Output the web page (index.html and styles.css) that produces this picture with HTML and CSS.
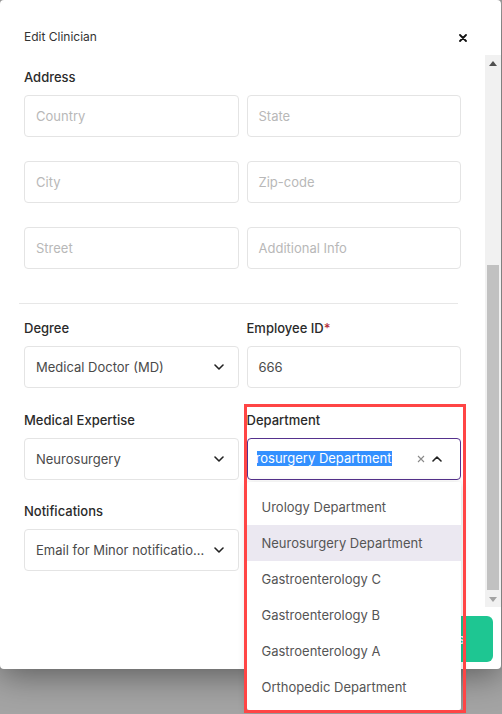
FILE: index.html
```html
<!DOCTYPE html>
<html>
<head>
<meta charset="utf-8">
<link rel="stylesheet" href="styles.css">
</head>
<body>
<div class="modal">
  <div class="modal-header">
    <span class="modal-title">Edit Clinician</span>
    <span class="close">
      <svg width="8" height="8" viewBox="0 0 8 8"><path d="M1 1L7 7M7 1L1 7" stroke="#111" stroke-width="1.8" stroke-linecap="round"/></svg>
    </span>
  </div>
  <div class="modal-body">
    <div class="content">
      <div class="section-label">Address</div>
      <div class="grid">
        <div class="input placeholder">Country</div>
        <div class="input placeholder">State</div>
        <div class="input placeholder">City</div>
        <div class="input placeholder">Zip-code</div>
        <div class="input placeholder">Street</div>
        <div class="input placeholder">Additional Info</div>
      </div>
      <div class="divider"></div>
      <div class="fields">
        <div class="field">
          <div class="label">Degree</div>
          <div class="input select"><span class="value">Medical Doctor (MD)</span>
            <svg class="chev" width="10" height="6" viewBox="0 0 10 6"><path d="M1 1L5 5L9 1" fill="none" stroke="#222" stroke-width="1.6" stroke-linecap="round" stroke-linejoin="round"/></svg>
          </div>
        </div>
        <div class="field">
          <div class="label">Employee ID<span class="req">*</span></div>
          <div class="input"><span class="value">666</span></div>
        </div>
        <div class="field">
          <div class="label">Medical Expertise</div>
          <div class="input select"><span class="value">Neurosurgery</span>
            <svg class="chev" width="10" height="6" viewBox="0 0 10 6"><path d="M1 1L5 5L9 1" fill="none" stroke="#222" stroke-width="1.6" stroke-linecap="round" stroke-linejoin="round"/></svg>
          </div>
        </div>
        <div class="field dept">
          <div class="label">Department</div>
          <div class="input select focused">
            <span class="typed"><span class="sel">Neurosurgery Department</span></span>
            <span class="clear">
              <svg width="8" height="8" viewBox="0 0 8 8"><path d="M1 1L7 7M7 1L1 7" stroke="#8a8a8a" stroke-width="1.1"/></svg>
            </span>
            <svg class="chev up" width="10" height="6" viewBox="0 0 10 6"><path d="M1 5L5 1L9 5" fill="none" stroke="#222" stroke-width="1.6" stroke-linecap="round" stroke-linejoin="round"/></svg>
          </div>
          <div class="menu">
            <div class="option">Urology Department</div>
            <div class="option active">Neurosurgery Department</div>
            <div class="option">Gastroenterology C</div>
            <div class="option">Gastroenterology B</div>
            <div class="option">Gastroenterology A</div>
            <div class="option">Orthopedic Department</div>
          </div>
        </div>
        <div class="field">
          <div class="label">Notifications</div>
          <div class="input select"><span class="value ellipsis">Email for Minor notifications</span>
            <svg class="chev" width="10" height="6" viewBox="0 0 10 6"><path d="M1 1L5 5L9 1" fill="none" stroke="#222" stroke-width="1.6" stroke-linecap="round" stroke-linejoin="round"/></svg>
          </div>
        </div>
      </div>
    </div>
    <div class="scrollbar">
      <div class="sb-btn">
        <svg width="8" height="5" viewBox="0 0 8 5"><path d="M0 5L4 0L8 5Z" fill="#505050"/></svg>
      </div>
      <div class="sb-track"><div class="sb-thumb"></div></div>
      <div class="sb-btn">
        <svg width="8" height="5" viewBox="0 0 8 5"><path d="M0 0L8 0L4 5Z" fill="#a3a3a3"/></svg>
      </div>
    </div>
  </div>
  <div class="modal-footer">
    <button class="btn-primary">Save Changes</button>
  </div>
</div>
<div class="annotation"></div>
</body>
</html>
```
FILE: styles.css
```css
* { box-sizing: border-box; }
html, body {
  margin: 0;
  padding: 0;
  width: 502px;
  height: 714px;
  overflow: hidden;
}
body {
  background: #a4a4a4;
  font-family: Inter, "Noto Sans", sans-serif;
  position: relative;
}
.modal {
  width: 501px;
  height: 669px;
  background: #fff;
  border-radius: 4px;
  box-shadow: 0 6px 34px rgba(0,0,0,0.45);
  display: flex;
  flex-direction: column;
}
.modal-header {
  height: 55px;
  display: flex;
  justify-content: space-between;
  align-items: flex-start;
  padding: 29px 34px 0 24px;
}
.modal-title {
  font-size: 12px;
  line-height: 16px;
  color: #333;
}
.close {
  display: flex;
  margin-top: 5px;
}
.modal-body {
  height: 552px;
  display: flex;
}
.content {
  flex: 1;
  padding: 14px 24px 0 24px;
  position: relative;
}
.section-label, .label {
  font-size: 13px;
  line-height: 16px;
  font-weight: 500;
  color: #2a2a2a;
  margin-bottom: 10px;
}
.req { color: #b3303d; }
.grid {
  display: grid;
  grid-template-columns: 1fr 1fr;
  column-gap: 8px;
  row-gap: 24px;
}
.input {
  height: 42px;
  border: 1px solid #e4e4e4;
  border-radius: 4px;
  display: flex;
  align-items: center;
  padding: 0 14px 0 11px;
  font-size: 13px;
  color: #4a4a4a;
}
.placeholder { color: #b8b8b8; }
.divider {
  height: 1px;
  background: #e7e7e7;
  margin: 34px 3px 16px -5px;
}
.fields {
  display: grid;
  grid-template-columns: 1fr 1fr;
  column-gap: 8px;
  row-gap: 23.5px;
}
.field { position: relative; min-width: 0; }
.select { justify-content: space-between; gap: 8px; }
.value {
  flex: 1;
  min-width: 0;
  white-space: nowrap;
}
.ellipsis { overflow: hidden; text-overflow: ellipsis; }
.chev { flex: none; }
.focused {
  border-color: #55318d;
  padding-left: 9px;
  padding-right: 18px;
  gap: 0;
}
.typed {
  width: 135px;
  overflow: hidden;
  display: flex;
  justify-content: flex-end;
  white-space: nowrap;
}
.sel {
  background: #3390ff;
  color: #fff;
  line-height: 15px;
  flex: none;
}
.clear {
  display: flex;
  margin-left: auto;
  margin-right: 7px;
}
.menu {
  position: absolute;
  left: 0;
  right: 0;
  top: calc(100% + 2px);
  background: #fff;
  box-shadow: 0 2px 10px rgba(0,0,0,0.18);
  padding: 7px 0 5px;
  z-index: 5;
  border-radius: 2px;
}
.option {
  height: 36px;
  display: flex;
  align-items: center;
  padding-left: 15px;
  font-size: 13px;
  color: #555;
}
.option.active { background: #ebe8f1; }
.scrollbar {
  width: 16px;
  background: #f1f1f1;
  display: flex;
  flex-direction: column;
}
.sb-btn {
  height: 16px;
  display: flex;
  align-items: center;
  justify-content: center;
}
.sb-track {
  flex: 1;
  display: flex;
  flex-direction: column;
  justify-content: flex-end;
  padding: 0 2px 1px;
}
.sb-thumb {
  height: 325px;
  background: #c1c1c1;
}
.modal-footer {
  flex: 1;
  display: flex;
  justify-content: flex-end;
  padding: 9px 8px 0 0;
}
.btn-primary {
  height: 46px;
  border: none;
  border-radius: 6px;
  background: #1ec692;
  color: #fff;
  font-family: inherit;
  font-size: 13px;
  font-weight: 600;
  padding: 0 28px;
}
.annotation {
  position: absolute;
  left: 244px;
  top: 404px;
  width: 222px;
  height: 309px;
  border: 3px solid #ff4545;
  pointer-events: none;
  z-index: 10;
}
```
